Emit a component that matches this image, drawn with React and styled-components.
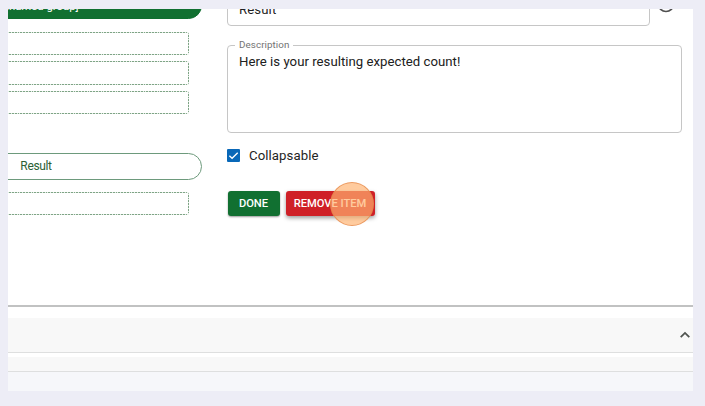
import React from 'react';
import styled, { createGlobalStyle } from 'styled-components';

const GlobalStyle = createGlobalStyle`
  * { box-sizing: border-box; }
  body { margin: 0; background: #ededf6; font-family: Roboto, sans-serif; overflow: hidden; }
`;

const Page = styled.div`
  width: 705px;
  height: 406px;
  padding: 9px 12px 15px 8px;
  background: #ededf6;
`;

const Viewport = styled.main`
  width: 685px;
  height: 382px;
  overflow: hidden;
  background: #fff;
`;

const Workspace = styled.section`
  display: flex;
  gap: 25px;
  height: 298px;
  border-bottom: 2px solid #c1c2c2;
`;

const Outline = styled.div`
  width: 194px;
  flex: none;
  display: flex;
  flex-direction: column;
  overflow: hidden;
`;

const Pill = styled.div`
  flex: none;
  display: flex;
  align-items: center;
  justify-content: center;
  width: 332px;
  height: 27px;
  margin-left: -138px;
  margin-top: ${(p) => p.$top}px;
  padding-top: ${(p) => (p.$filled ? 3 : 0)}px;
  border: 1px solid ${(p) => (p.$filled ? '#0f6f2f' : '#6d9a7c')};
  border-radius: 14px;
  background: ${(p) => (p.$filled ? '#117031' : '#fff')};
  color: ${(p) => (p.$filled ? '#fff' : '#2c6035')};
  font-size: ${(p) => (p.$filled ? 11.3 : 12)}px;
  line-height: 14px;
  letter-spacing: ${(p) => (p.$filled ? 0 : -0.35)}px;
`;

const DropSlots = styled.div`
  flex: none;
  display: flex;
  flex-direction: column;
  gap: 6px;
  margin: ${(p) => p.$top}px 13px 0 -10px;
`;

const dash = (direction) =>
  `repeating-linear-gradient(${direction}, #7fa486 0 1.8px, #e3eee5 1.8px 2.8px)`;

const Slot = styled.div`
  height: 23.3px;
  border-radius: 3px;
  background:
    ${dash('to right')} top / 100% 1px no-repeat,
    ${dash('to right')} bottom / 100% 1px no-repeat,
    ${dash('to bottom')} right / 1px 100% no-repeat;
`;

const Form = styled.div`
  flex: 1;
  min-width: 0;
  padding-right: 10px;
  display: flex;
  flex-direction: column;
  align-items: flex-start;
`;

const TitleRow = styled.div`
  display: flex;
  gap: 6px;
  height: 40px;
  margin-top: -23px;
  flex: none;
`;

const TitleField = styled.div`
  width: 423px;
  height: 40px;
  padding: 14px 11px 0;
  border: 1px solid #c6c6c6;
  border-radius: 4px;
  color: #1f1f1f;
  font-size: 13.2px;
  line-height: 17px;
  letter-spacing: 0.1px;
`;

const HelpIcon = styled.svg`
  width: 20px;
  height: 20px;
  margin-top: 8px;
  fill: #505050;
`;

const DescriptionField = styled.fieldset`
  width: 455px;
  height: 94px;
  margin: 13px 0 0;
  padding: 0 11px;
  border: 1px solid #c6c6c6;
  border-radius: 4px;
  color: #202020;
  flex: none;
`;

const Legend = styled.legend`
  margin-left: -4px;
  padding: 0 4px;
  height: 12px;
  color: #737373;
  font-size: 9.8px;
  line-height: 12px;
  letter-spacing: 0.08px;
`;

const Description = styled.div`
  margin-top: 3px;
  font-size: 13.2px;
  line-height: 16px;
  letter-spacing: 0.02px;
`;

const CheckRow = styled.div`
  display: flex;
  align-items: center;
  gap: 9px;
  height: 18px;
  margin-top: 13px;
  color: #242424;
  font-size: 13.2px;
  letter-spacing: 0.08px;
`;

const CheckBox = styled.svg`
  width: 13px;
  height: 13px;
  margin-top: 1px;
`;

const Actions = styled.div`
  display: flex;
  gap: 6px;
  margin: 27px 0 0 0.5px;
`;

const Button = styled.div`
  position: relative;
  display: flex;
  align-items: center;
  justify-content: center;
  width: ${(p) => p.$width}px;
  height: 25px;
  border-radius: 3px;
  background: ${(p) => p.$color};
  box-shadow: 0 ${(p) => (p.$raised ? '2px 4px' : '1px 2px')} rgba(0, 0, 0, 0.4);
  color: #fff;
  font-size: 11.2px;
  font-weight: 500;
  letter-spacing: -0.05px;
  white-space: nowrap;
`;

const ClickMarker = styled.span`
  position: absolute;
  left: 44.5px;
  top: -9px;
  width: 44px;
  height: 44px;
  border: 1px solid rgba(226, 132, 70, 0.7);
  border-radius: 50%;
  background: rgba(255, 179, 112, 0.68);
`;

const PanelHeader = styled.div`
  display: flex;
  align-items: center;
  justify-content: flex-end;
  height: 35px;
  margin-top: 11px;
  padding-right: 2px;
  border-bottom: 1px solid #dedfdf;
  background: #f8f8f8;
`;

const Chevron = styled.svg`
  width: 12px;
  height: 12px;
  fill: none;
  stroke: #505450;
  stroke-width: 1.8;
`;

const PanelStrip = styled.div`
  height: 15px;
  margin-top: 4px;
  border-bottom: 1px solid #dedfdf;
  background: #f8f8f8;
`;

const PanelBody = styled.div`
  height: 19px;
  background: #f6f7fa;
`;

export default function App() {
  return (
    <Page>
      <GlobalStyle />
      <Viewport>
        <Workspace>
          <Outline>
            <Pill $filled $top={-17}>[unnamed group]</Pill>
            <DropSlots $top={13}>
              <Slot />
              <Slot />
              <Slot />
            </DropSlots>
            <Pill $top={39}>Result</Pill>
            <DropSlots $top={12}>
              <Slot />
            </DropSlots>
          </Outline>
          <Form>
            <TitleRow>
              <TitleField>Result</TitleField>
              <HelpIcon viewBox="0 0 24 24">
                <path d="M11 18h2v-2h-2v2zm1-16a10 10 0 1 0 0 20 10 10 0 0 0 0-20zm0 18a8 8 0 1 1 0-16 8 8 0 0 1 0 16zm0-14a4 4 0 0 0-4 4h2a2 2 0 1 1 4 0c0 2-3 1.75-3 5h2c0-2.25 3-2.5 3-5a4 4 0 0 0-4-4z" />
              </HelpIcon>
            </TitleRow>
            <DescriptionField>
              <Legend>Description</Legend>
              <Description>Here is your resulting expected count!</Description>
            </DescriptionField>
            <CheckRow>
              <CheckBox viewBox="0 0 12 12">
                <rect width="12" height="12" rx="1" fill="#0968b8" />
                <path d="M2.2 6.2 4.7 8.6 9.9 3.4" fill="none" stroke="#fff" strokeWidth="1.2" />
              </CheckBox>
              Collapsable
            </CheckRow>
            <Actions>
              <Button $width={52} $color="#117031">DONE</Button>
              <Button $width={89} $color="#cf2027" $raised>
                REMOVE ITEM
                <ClickMarker />
              </Button>
            </Actions>
          </Form>
        </Workspace>
        <PanelHeader>
          <Chevron viewBox="0 0 12 12">
            <path d="M1.7 8.2 6 3.9l4.3 4.3" />
          </Chevron>
        </PanelHeader>
        <PanelStrip />
        <PanelBody />
      </Viewport>
    </Page>
  );
}
